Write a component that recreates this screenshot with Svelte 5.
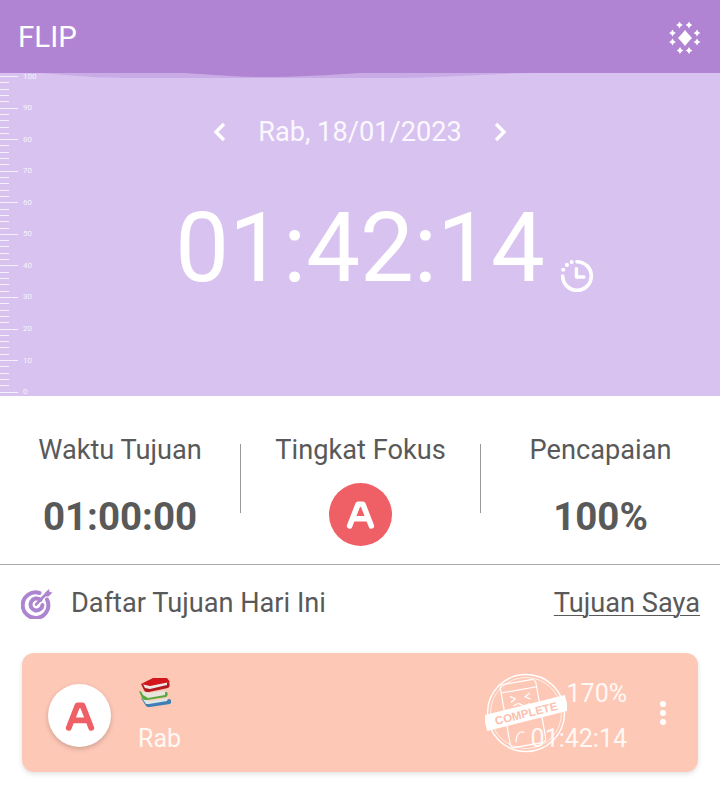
<script>
  const ticks = Array.from({ length: 51 }, (_, i) => 100 - i * 2)
  const stars = [[10.5, 3], [20, 3], [3.5, 11], [28, 11], [3.5, 20], [28, 20], [11, 28.5], [20, 28.5]]
</script>

<div class="page">
  <header class="topbar">
    <span class="title">FLIP</span>
    <svg class="sparkle" viewBox="0 0 32 32" width="32" height="32" fill="#fff">
      <path d="M16 8Q19.500 12.500 23 16 19.500 19.500 16 24 12.500 19.500 9 16 12.500 12.500 16 8Z" />
      {#each stars as [x, y]}
        <path d="M0-3.400L1.300-1.300 3.400 0 1.300 1.300 0 3.400-1.300 1.300-3.400 0-1.300-1.300Z" transform="translate({x} {y})" />
      {/each}
    </svg>
  </header>

  <section class="hero">
    <svg class="wave" viewBox="0 0 720 6" width="720" height="6">
      <path d="M40 0C70 2 90 5 130 5H400C450 4 490 1 530 0Z" fill="#c9ace6" />
      <path d="M185 0C215 2 240 4 265 4C295 4 330 2 360 0Z" fill="#b184d3" />
    </svg>
    <div class="ruler">
      {#each ticks as t}
        <div class="tick" class:major={t % 10 === 0}>
          <span class="line"></span>
          {#if t % 10 === 0}<span class="num">{t}</span>{/if}
        </div>
      {/each}
    </div>

    <div class="date-row">
      <svg viewBox="0 0 16 24" width="16" height="24" class="chev">
        <path d="M12 4l-8 8 8 8" />
      </svg>
      <span class="date">Rab, 18/01/2023</span>
      <svg viewBox="0 0 16 24" width="16" height="24" class="chev">
        <path d="M4 4l8 8-8 8" />
      </svg>
    </div>

    <div class="clock">
      <span class="time">01:42:14</span>
      <svg class="history" viewBox="0 0 34 34" width="36" height="36">
        <path d="M17 3.500A13.500 13.500 0 1 1 3.500 17" fill="none" stroke="#fff" stroke-width="3.400" stroke-linecap="round" />
        <path d="M16.500 10v8h7" fill="none" stroke="#fff" stroke-width="3.200" stroke-linecap="round" stroke-linejoin="round" />
        <circle cx="4" cy="11" r="1.900" fill="#fff" />
        <circle cx="7.500" cy="6.500" r="1.900" fill="#fff" />
        <circle cx="12" cy="3.800" r="1.900" fill="#fff" />
      </svg>
    </div>
  </section>

  <section class="stats">
    <div class="stat">
      <div class="label">Waktu Tujuan</div>
      <div class="value">01:00:00</div>
    </div>
    <div class="stat">
      <div class="label">Tingkat Fokus</div>
      <div class="grade">
        <svg viewBox="0 0 24 24" width="29" height="29" fill="none" stroke="#fff" stroke-width="4.600" stroke-linecap="round" stroke-linejoin="round">
          <path d="M3 21.500L10 3.500h4l7 18" />
          <path d="M7 15.500h10" />
        </svg>
      </div>
    </div>
    <div class="stat">
      <div class="label">Pencapaian</div>
      <div class="value">100%</div>
    </div>
  </section>

  <section class="goals-head">
    <div class="goals-title">
      <svg viewBox="0 0 32 32" width="32" height="32" fill="none" stroke="#ad84cf" stroke-width="4" stroke-linecap="round">
        <path d="M26 12.500A12.800 12.800 0 1 1 18.500 6" />
        <path d="M19.500 13A6 6 0 1 0 21.500 18" />
        <path d="M15 17.500L27 5" stroke-width="2.600" />
        <path d="M24 6l4-4 .5 3 3 .5-4 4h-3z" fill="#ad84cf" stroke="none" />
      </svg>
      <span>Daftar Tujuan Hari Ini</span>
    </div>
    <span class="link">Tujuan Saya</span>
  </section>

  <div class="card">
    <div class="badge">
      <svg viewBox="0 0 24 24" width="30" height="30" fill="none" stroke="#ee5f66" stroke-width="4.600" stroke-linecap="round" stroke-linejoin="round">
        <path d="M3 21.500L10 3.500h4l7 18" />
        <path d="M7 15.500h10" />
      </svg>
    </div>
    <div class="card-main">
      <svg class="books" viewBox="0 0 34 32" width="34" height="32">
        <path d="M3 21l5 8c1 1 2 1 4 1l20-3c2-1 1-4 0-5L12 25z" fill="#3f7fb5" />
        <path d="M8 27l-4-6 7 3 19-3-1 3-18 3z" fill="#dfe6e6" />
        <path d="M1 14l3 7c1 2 3 2 5 2l19-3c2-1 2-4 1-5L10 17z" fill="#5aa83c" />
        <path d="M5 18l-2-4 7 2 17-2v4l-17 3z" fill="#e6e6dc" />
        <path d="M3 7l3 6c1 2 2 2 5 2l19-4c2-1 2-4 1-6L12 8z" fill="#b11a1f" />
        <path d="M7 11L5 7l7 1 17-3 0 3-17 4z" fill="#efe9e6" />
        <path d="M3 7L15 1h14l3 4-20 4z" fill="#d3161c" />
      </svg>
      <span class="goal-name">Rab</span>
    </div>
    <div class="result">
      <svg class="stamp" viewBox="0 0 82 82" width="82" height="82" fill="none" stroke="#fff">
        <circle cx="41" cy="41" r="38.500" stroke-width="1.400" />
        <circle cx="41" cy="41" r="35.500" stroke-width="0.700" />
        <g transform="rotate(-10 41 41)" stroke-width="1.200">
          <rect x="20" y="9" width="36" height="64" rx="4" />
          <path d="M20 17h36" />
          <path d="M28 22l5 3-5 3M48 22l-5 3 5 3" />
          <path d="M30 32c3-2 6-2 8 0 2 2 6 2 8 0" />
          <path d="M26 68c2-8 6-11 10-8" />
        </g>
        <g transform="rotate(-14 41 41)">
          <rect x="-1" y="33" width="84" height="16" fill="#fff" stroke="none" />
          <text x="41" y="45.500" text-anchor="middle" class="stamp-text">COMPLETE</text>
        </g>
      </svg>
      <div class="nums">
        <span>170%</span>
        <span>01:42:14</span>
      </div>
    </div>
    <div class="dots"><i></i><i></i><i></i></div>
  </div>
</div>

<style>
  :global(body) {
    margin: 0;
    background: #fff;
  }

  .page {
    width: 720px;
    height: 785px;
    overflow: hidden;
    font-family: Roboto, "Liberation Sans", sans-serif;
    color: #595959;
  }

  .topbar {
    height: 73px;
    background: #b184d3;
    display: flex;
    align-items: center;
    justify-content: space-between;
    padding: 0 19px 0 18px;
    box-sizing: border-box;
    color: #fff;
  }

  .title {
    font-size: 29.500px;
    margin-top: 1px;
  }

  .sparkle {
    margin-top: 3px;
  }

  .hero {
    position: relative;
    height: 323px;
    background: #d8c3f0;
    display: flex;
    flex-direction: column;
    align-items: center;
    color: #fff;
  }

  .wave {
    position: absolute;
    top: 0;
    left: 0;
  }

  .ruler {
    position: absolute;
    left: 0;
    top: 3px;
    height: 317px;
    display: flex;
    flex-direction: column;
    justify-content: space-between;
  }

  .tick {
    height: 1px;
    display: flex;
    align-items: center;
    gap: 5px;
  }

  .line {
    width: 9px;
    height: 1px;
    background: rgba(255, 255, 255, 0.75);
  }

  .major .line {
    width: 18px;
  }

  .num {
    font-size: 8px;
    line-height: 8px;
    color: rgba(255, 255, 255, 0.8);
  }

  .date-row {
    margin-top: 43px;
    display: flex;
    align-items: center;
    gap: 31px;
    height: 32px;
  }

  .date {
    font-size: 27.200px;
    color: rgba(255, 255, 255, 0.9);
    margin: 0 -1px;
  }

  .chev {
    fill: none;
    stroke: #fff;
    stroke-width: 3.400;
  }

  .clock {
    margin-top: 46px;
    margin-left: 50px;
    display: flex;
    align-items: flex-end;
    gap: 14px;
  }

  .time {
    font-size: 95.800px;
    line-height: 108px;
  }

  .history {
    margin-bottom: 8px;
  }

  .stats {
    height: 169px;
    box-sizing: border-box;
    border-bottom: 1px solid #aaa;
    display: grid;
    grid-template-columns: repeat(3, 1fr);
    padding-top: 48px;
  }

  .stat {
    height: 69px;
    display: flex;
    flex-direction: column;
    align-items: center;
  }

  .stat + .stat {
    border-left: 1px solid #999;
  }

  .label {
    font-size: 27.200px;
    line-height: 30px;
    margin-top: -9px;
    white-space: nowrap;
  }

  .value {
    font-size: 38.500px;
    font-weight: 700;
    line-height: 44px;
    margin-top: 30px;
  }

  .grade {
    width: 63px;
    height: 63px;
    border-radius: 50%;
    background: #ee5f66;
    display: flex;
    align-items: center;
    justify-content: center;
    margin-top: 18px;
    flex-shrink: 0;
  }

  .goals-head {
    height: 88px;
    box-sizing: border-box;
    padding: 19px 20px 0 21px;
    display: flex;
    justify-content: space-between;
    align-items: flex-start;
    font-size: 27.200px;
  }

  .goals-title {
    display: flex;
    align-items: center;
    gap: 18px;
    height: 38px;
  }

  .link {
    line-height: 38px;
    text-decoration: underline;
    text-underline-offset: 3px;
    text-decoration-thickness: 1px;
  }

  .card {
    margin: 0 22px;
    height: 119px;
    background: #fec8b6;
    border-radius: 12px;
    box-shadow: 0 2px 5px rgba(0, 0, 0, 0.12);
    display: flex;
    align-items: center;
    padding: 0 26px;
    box-sizing: border-box;
    color: #fff;
  }

  .badge {
    width: 63px;
    height: 63px;
    margin-top: 6px;
    border-radius: 50%;
    background: #fff;
    box-shadow: 0 2px 5px rgba(0, 0, 0, 0.2);
    display: flex;
    align-items: center;
    justify-content: center;
    flex-shrink: 0;
  }

  .card-main {
    margin-left: 27px;
    display: flex;
    flex-direction: column;
    gap: 15px;
    margin-top: 4px;
  }

  .goal-name {
    font-size: 25px;
    line-height: 29px;
    color: rgba(255, 255, 255, 0.9);
  }

  .result {
    margin-left: auto;
    display: flex;
    align-items: center;
    margin-top: 6px;
  }

  .stamp {
    margin-right: -36px;
    margin-top: -5px;
  }

  .stamp-text {
    font-family: "Liberation Sans", sans-serif;
    font-size: 11.500px;
    font-weight: 700;
    fill: #fbbfae;
    stroke: none;
  }

  .nums {
    display: flex;
    flex-direction: column;
    align-items: flex-end;
    gap: 16px;
    font-size: 25px;
    line-height: 29px;
    color: rgba(255, 255, 255, 0.9);
    position: relative;
  }

  .dots {
    margin-left: 33px;
    margin-right: 6px;
    display: flex;
    flex-direction: column;
    gap: 3px;
  }

  .dots i {
    width: 6px;
    height: 6px;
    border-radius: 50%;
    background: #fff;
  }
</style>
